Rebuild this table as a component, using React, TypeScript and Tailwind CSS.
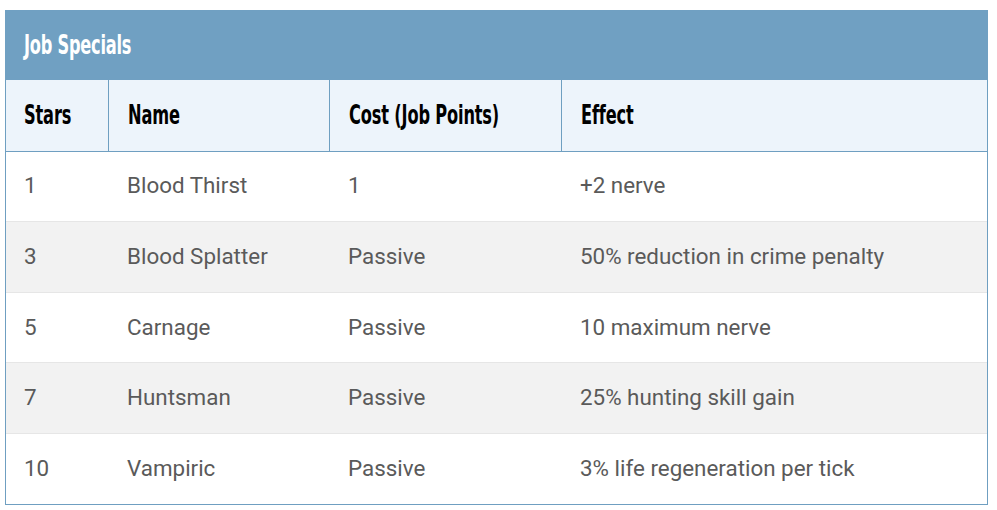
import React from 'react';

const rows = [
  { stars: '1', name: 'Blood Thirst', cost: '1', effect: '+2 nerve' },
  { stars: '3', name: 'Blood Splatter', cost: 'Passive', effect: '50% reduction in crime penalty' },
  { stars: '5', name: 'Carnage', cost: 'Passive', effect: '10 maximum nerve' },
  { stars: '7', name: 'Huntsman', cost: 'Passive', effect: '25% hunting skill gain' },
  { stars: '10', name: 'Vampiric', cost: 'Passive', effect: '3% life regeneration per tick' },
];

const headFont = "font-['DejaVu_Sans_Condensed',sans-serif]";

const App = () => {
  return (
    <div className="w-[997px] h-[510px] bg-white pt-[10px] pl-[5px]">
      <div className="w-[983px] border-x border-b border-[#6f9fc1]">
        {/* Title bar */}
        <div className="h-[70px] bg-[#70a0c2] flex items-center px-[19px] -mx-px">
          <h2
            className={`${headFont} font-bold text-[24px] text-white tracking-[-0.3px] scale-x-[0.75] scale-y-[1.14] origin-left`}
          >
            Job Specials
          </h2>
        </div>

        <table className="w-full border-collapse font-['Roboto',sans-serif] text-[22.4px] text-[#5a5a5a]">
          <colgroup>
            <col className="w-[102px]" />
            <col className="w-[221px]" />
            <col className="w-[232px]" />
            <col />
          </colgroup>
          <thead>
            <tr className="h-[71px] bg-[#edf4fb] border-b border-[#6f9fc1]">
              {['Stars', 'Name', 'Cost (Job Points)', 'Effect'].map((h, i) => (
                <th
                  key={h}
                  className={`${headFont} font-bold text-[24px] text-black text-left tracking-[-0.2px] ${
                    i === 0 ? 'pl-[18px]' : 'pl-[19px]'
                  } ${i < 3 ? 'border-r border-[#6f9fc1]' : ''}`}
                >
                  <span className="inline-block scale-x-[0.75] scale-y-[1.14] origin-left">{h}</span>
                </th>
              ))}
            </tr>
          </thead>
          <tbody>
            {rows.map((r, i) => (
              <tr
                key={r.stars}
                className={`h-[70.6px] ${i % 2 === 1 ? 'bg-[#f2f2f2]' : 'bg-white'} ${
                  i < rows.length - 1 ? 'border-b border-[#e6e6e6]' : ''
                }`}
              >
                <td className="pl-[18px]">{r.stars}</td>
                <td className="pl-[19px]">{r.name}</td>
                <td className="pl-[19px]">{r.cost}</td>
                <td className="pl-[19px]">{r.effect}</td>
              </tr>
            ))}
          </tbody>
        </table>
      </div>
    </div>
  );
};

export default App;
